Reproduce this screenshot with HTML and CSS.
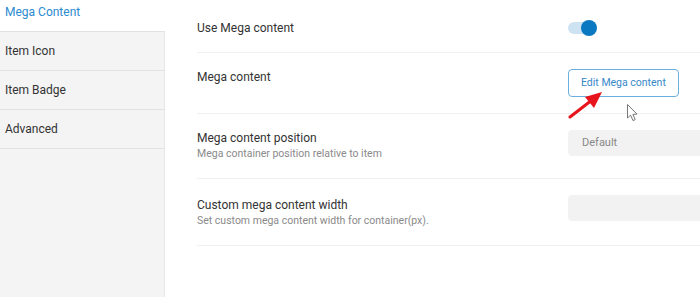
FILE: index.html
```html
<!DOCTYPE html>
<html>
<head lang="en">
    <meta charset="UTF-8">
    <title>Mega content settings</title>
    <link rel="stylesheet" href="styles.css">
</head>
<body>
<div class="panel">
    <div class="sidebar">
        <ul class="tabs">
            <li class="active">Mega Content</li>
            <li>Item Icon</li>
            <li>Item Badge</li>
            <li>Advanced</li>
        </ul>
    </div>
    <div class="main">
        <div class="row row-first">
            <div class="label">
                <div class="title">Use Mega content</div>
            </div>
            <div class="control">
                <span class="toggle"><span class="knob"></span></span>
            </div>
        </div>
        <div class="row">
            <div class="label">
                <div class="title">Mega content</div>
            </div>
            <div class="control">
                <a class="btn" href="javascript:;">Edit Mega content</a>
            </div>
        </div>
        <div class="row">
            <div class="label">
                <div class="title">Mega content position</div>
                <div class="desc">Mega container position relative to item</div>
            </div>
            <div class="control">
                <div class="field">Default</div>
            </div>
        </div>
        <div class="row row-last">
            <div class="label">
                <div class="title">Custom mega content width</div>
                <div class="desc">Set custom mega content width for container(px).</div>
            </div>
            <div class="control">
                <div class="field"></div>
            </div>
        </div>
    </div>
</div>
<!-- annotation drawn over the screenshot -->
<svg class="arrow" width="40" height="34" viewBox="0 0 40 34">
    <line x1="2" y1="27" x2="24" y2="10" stroke="#e8141b" stroke-width="3" stroke-linecap="round"/>
    <polygon points="34,2 17,7 26,18" fill="#e8141b"/>
</svg>
<svg class="cursor" width="14" height="20" viewBox="0 0 14 20">
    <path d="M1.5 1.5 L1.5 15 L4.6 12.2 L7 17.6 L9.2 16.6 L6.9 11.4 L11 11.1 Z" fill="#fff" stroke="#777" stroke-width="1" stroke-linejoin="round"/>
</svg>
</body>
</html>
```

FILE: styles.css
```css
body, ul, li {
    margin: 0;
    padding: 0;
}
body {
    font-family: Roboto, "Liberation Sans", sans-serif;
    color: #333;
    background: #fff;
    overflow: hidden;
}
.panel {
    display: flex;
    height: 297px;
    overflow: hidden;
}
.sidebar {
    width: 164px;
    flex-shrink: 0;
    background: #f4f4f4;
    border-right: 1px solid #e6e6e6;
}
.tabs {
    list-style-type: none;
    margin-top: -7px;
}
.tabs li {
    height: 38px;
    line-height: 38px;
    padding-left: 5px;
    font-size: 12px;
    border-bottom: 1px solid #e2e2e2;
}
.tabs li.active {
    background: #fff;
    color: #2b8bd0;
    margin-right: -1px;
}
.main {
    flex: 1;
    padding-left: 32px;
    min-width: 0;
}
.row {
    display: flex;
    align-items: flex-start;
    padding: 16px 0;
    border-bottom: 1px solid #f0f0f0;
}
.row-first {
    align-items: center;
    padding: 16px 0 12px;
}
.row-last .label {
    padding-top: 2px;
}
.label {
    width: 371px;
    flex-shrink: 0;
}
.title {
    font-size: 12px;
    line-height: 16px;
    color: #333;
}
.row-first .title {
    line-height: 24px;
}
.desc {
    font-size: 10.5px;
    line-height: 16px;
    color: #8a8a8a;
}
.control {
    flex: 1;
    margin-right: -40px;
}
.toggle {
    display: block;
    position: relative;
    width: 28px;
    height: 12px;
    margin: 6px 0;
    border-radius: 6px;
    background: #cde3f2;
}
.knob {
    position: absolute;
    right: -1px;
    top: -2px;
    width: 16px;
    height: 16px;
    border-radius: 50%;
    background: #0b79c1;
}
.btn {
    display: block;
    width: fit-content;
    box-sizing: border-box;
    height: 28px;
    line-height: 26px;
    padding: 0 12px;
    border: 1px solid #6cb0dd;
    border-radius: 4px;
    font-size: 10.5px;
    color: #3789c9;
    text-decoration: none;
}
.field {
    height: 26px;
    line-height: 26px;
    padding-left: 14px;
    background: #f2f2f2;
    border-radius: 4px;
    font-size: 11px;
    color: #888;
}
.arrow {
    position: absolute;
    left: 568px;
    top: 90px;
}
.cursor {
    position: absolute;
    left: 626px;
    top: 103px;
}
```
